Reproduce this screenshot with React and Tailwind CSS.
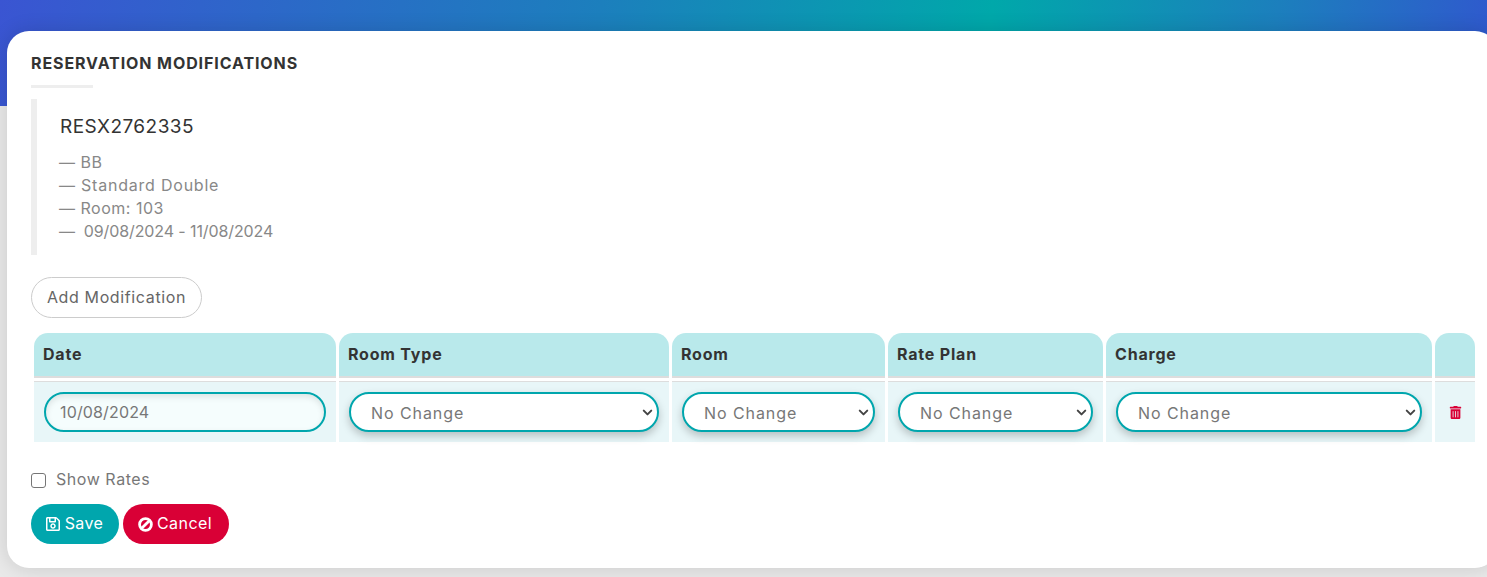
import { ChevronDown } from 'lucide-react';
import { FaRegSave, FaTrashAlt } from 'react-icons/fa';

const columns = ['Date', 'Room Type', 'Room', 'Rate Plan', 'Charge', ''];

function ChangeSelect() {
  return (
    <div className="relative w-full">
      <select
        defaultValue="none"
        className="h-10 w-full appearance-none rounded-[20px] border-2 border-[#00a6ad] bg-white pl-[20px] pr-0 pt-[2px] text-[16px] tracking-[0.93px] text-[#777] shadow-[0_4px_8px_rgba(0,0,0,0.22)] outline-none"
      >
        <option value="none">No Change</option>
      </select>
      <ChevronDown size={15} strokeWidth={3.2} className="pointer-events-none absolute right-[4px] top-[13px] text-[#444]" />
    </div>
  );
}

function BanIcon() {
  return (
    <svg width="15" height="15" viewBox="0 0 15 15" fill="none" stroke="currentColor" strokeWidth="2.8">
      <circle cx="7.5" cy="7.5" r="5.9" />
      <path d="M3.4 11.6 11.6 3.4" />
    </svg>
  );
}

export default function App() {
  return (
    <div className="h-screen overflow-hidden bg-[#e9e9e9] font-['Inter','Liberation_Sans',sans-serif]">
      {/* 상단 그라디언트 */}
      <div className="h-[106px] bg-[linear-gradient(100deg,#3a55d2_0%,#1c7fbd_40%,#00a8aa_66%,#1c7fbd_85%,#3058ce_100%)]" />

      <div className="-mt-[75px] ml-[7px] -mr-[10px] h-[537px] rounded-[22px] bg-white pl-6 pt-[22px] shadow-[0_0_20px_rgba(0,0,0,0.14)]">
        <h1 className="text-[16px] leading-5 font-bold tracking-[0.9px] text-[#333]">RESERVATION MODIFICATIONS</h1>
        <div className="mt-[12px] h-[3px] w-[62px] bg-[#eee]" />

        {/* 예약 정보 */}
        <div className="mt-[11px] h-[156px] w-[1000px] border-l-[6px] border-[#eee] pl-[23px] pt-[16px]">
          <div className="text-[19px] leading-6 tracking-[0.45px] text-[#333]">RESX2762335</div>
          <div className="mt-[12px] -ml-px text-[16px] leading-[23px] text-[#888]">
            <div className="tracking-[0.55px]">— BB</div>
            <div className="tracking-[0.78px]">— Standard Double</div>
            <div className="tracking-[0.5px]">— Room: 103</div>
            <div className="tracking-[-0.1px]">—&nbsp; 09/08/2024 - 11/08/2024</div>
          </div>
        </div>

        <button className="mt-[22px] block h-[41px] w-[171px] rounded-[21px] border border-[#ccc] bg-white pb-[2px] text-center text-[16px] tracking-[0.63px] text-[#666]">
          Add Modification
        </button>

        {/* 변경 테이블 */}
        <div className="mt-[15px] ml-[3px] grid w-[1441px] grid-cols-[302px_330px_213px_215px_326px_40px] gap-x-[3px]">
          {columns.map((col, i) => (
            <div
              key={i}
              className="h-[45px] rounded-t-[14px] border-b-2 border-[#ddd] bg-[#b9e9eb] pl-[9px] pt-[11px] text-[16px] leading-5 font-bold tracking-[0.8px] text-[#333]"
            >
              {col}
            </div>
          ))}
          <div className="mt-[3px] flex h-[61px] items-center border-t border-[#ddd] bg-[#e8f6f8] px-[10px]">
            <div className="flex h-10 w-full items-center rounded-[20px] border-2 border-[#00a6ad] bg-[#f5fdfd] pl-[14px] pb-[1px] text-[16px] tracking-[0.15px] text-[#777] shadow-[inset_0_3px_6px_rgba(0,0,0,0.1)]">
              10/08/2024
            </div>
          </div>
          {[0, 1, 2, 3].map((i) => (
            <div key={i} className="mt-[3px] flex h-[61px] items-center border-t border-[#ddd] bg-[#e8f6f8] px-[10px]">
              <ChangeSelect />
            </div>
          ))}
          <div className="mt-[3px] flex h-[61px] items-center justify-center border-t border-[#ddd] bg-[#e8f6f8]">
            <FaTrashAlt className="text-[13px] text-[#d90036]" />
          </div>
        </div>

        <label className="mt-[28px] flex h-5 items-center gap-[10px] text-[16px] leading-[18px] tracking-[0.55px] text-[#777]">
          <span className="h-[15px] w-[15px] rounded-[3px] border border-[#767676] bg-white" />
          <span className="-mt-[2px]">Show Rates</span>
        </label>

        {/* 저장 / 취소 */}
        <div className="mt-[14px] flex gap-1">
          <button className="flex h-10 w-[88px] items-center justify-center gap-[4px] rounded-[20px] bg-[#00a6ad] pr-[2px] text-[16px] tracking-[0.4px] text-white">
            <FaRegSave className="text-[16px]" />
            <span className="-mt-[2px]">Save</span>
          </button>
          <button className="flex h-10 w-[106px] items-center justify-center gap-[4px] rounded-[20px] bg-[#d90036] pr-[2px] text-[16px] tracking-[0.45px] text-white">
            <BanIcon />
            <span className="-mt-[2px]">Cancel</span>
          </button>
        </div>
      </div>
    </div>
  );
}
